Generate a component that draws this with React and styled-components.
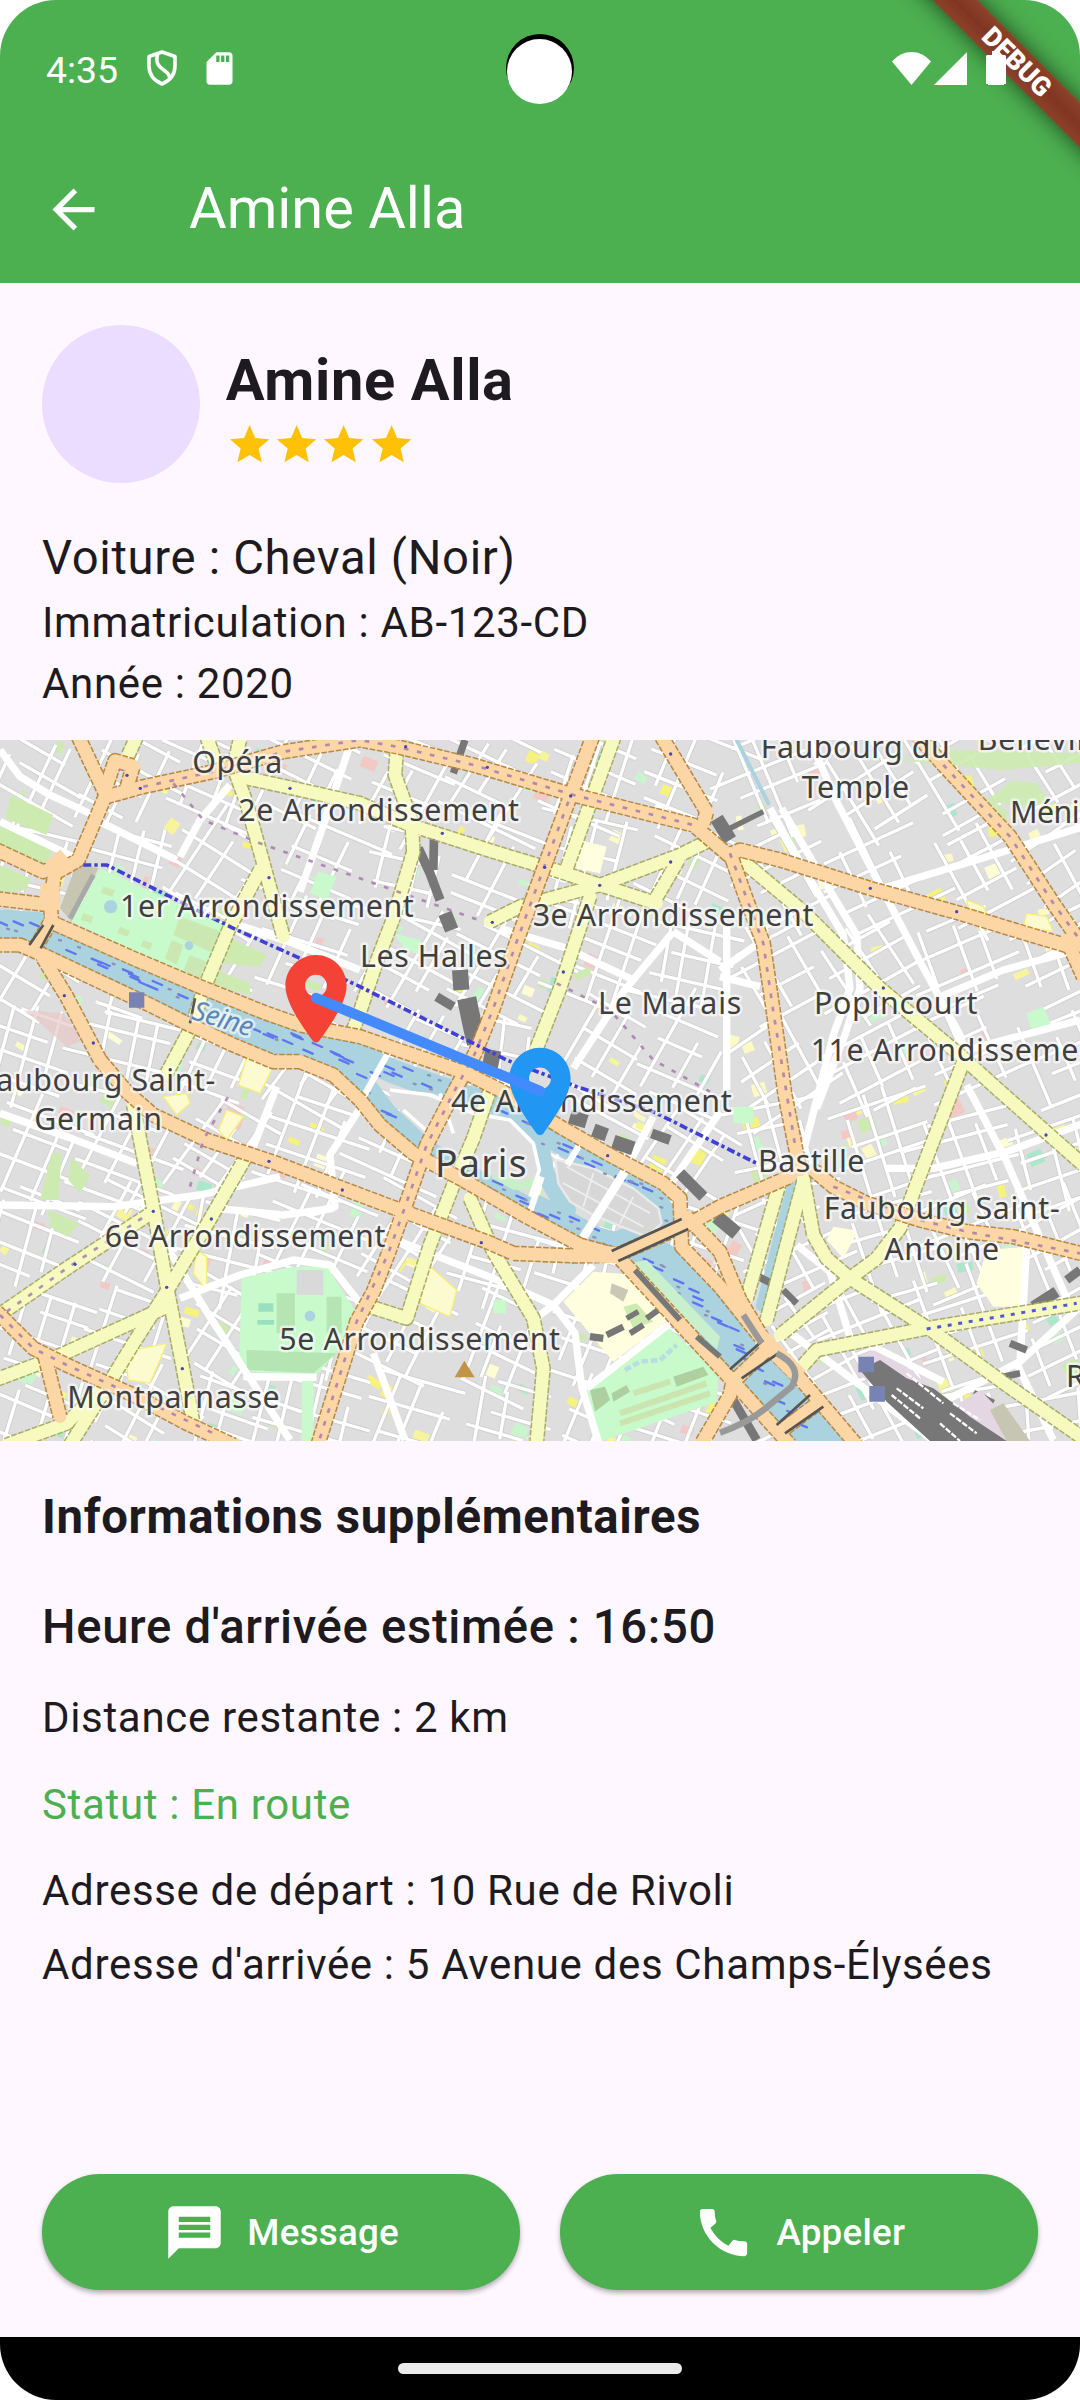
import React from "react";
import styled, { createGlobalStyle } from "styled-components";
import { MdArrowBack, MdCall, MdMessage, MdSdCard, MdStar } from "react-icons/md";

const GREEN = "#4caf50";
const INK = "#1d1b20";

const GlobalStyle = createGlobalStyle`
  * { box-sizing: border-box; }
  body { margin: 0; background: #fff; font-family: Roboto, sans-serif; }
`;

const Screen = styled.main`
  position: relative;
  display: flex;
  flex-direction: column;
  width: 1080px;
  height: 2400px;
  overflow: hidden;
  border-radius: 56px;
  background: #fef7ff;
  color: ${INK};
`;

const Header = styled.header`
  height: 283px;
  flex: none;
  background: ${GREEN};
  color: #fff;
`;

const StatusBar = styled.div`
  display: flex;
  align-items: center;
  height: 136px;
  padding: 0 74px 0 46px;
`;

const Clock = styled.span`
  width: 101px;
  padding-top: 4px;
  font-size: 37.4px;
  line-height: 44px;
`;

const StatusIcon = styled.svg`
  display: block;
  flex: none;
  width: ${(p) => p.$w}px;
  height: ${(p) => p.$h}px;
  margin-left: ${(p) => p.$gap || 0}px;
`;

const SdIcon = styled(MdSdCard)`
  width: 39px;
  height: 39px;
  margin-left: 23px;
  margin-top: 1px;
`;

const SystemIcons = styled.div`
  display: flex;
  align-items: center;
  margin-left: auto;
`;

const CameraRing = styled.div`
  position: absolute;
  top: 34px;
  left: 506px;
  width: 68px;
  height: 68px;
  border-radius: 50%;
  background: #000;
`;

const CameraHole = styled.div`
  position: absolute;
  top: 39px;
  left: 507px;
  width: 65px;
  height: 65px;
  border-radius: 50%;
  background: #fff;
`;

const DebugBanner = styled.div`
  position: absolute;
  top: 46px;
  left: 867px;
  width: 300px;
  height: 31.6px;
  transform: rotate(45deg);
  background: linear-gradient(#8b4329, #813424 50%, #8b4329);
  box-shadow: 0 0 22px rgba(0, 0, 0, 0.6);
  color: #fff;
  font-size: 26.8px;
  font-weight: 900;
  line-height: 32px;
  text-align: center;
`;

const BatteryLayer = styled.div`
  position: absolute;
  top: 51px;
  left: 986px;
`;

const Toolbar = styled.div`
  display: flex;
  align-items: center;
  height: 147px;
  padding-left: 42px;
`;

const BackIcon = styled(MdArrowBack)`
  width: 63px;
  height: 63px;
  margin-right: 84px;
`;

const Title = styled.h1`
  margin: 0;
  padding-bottom: 3px;
  font-size: 57.75px;
  font-weight: 400;
  line-height: 72px;
`;

const Profile = styled.section`
  display: flex;
  align-items: center;
  gap: 26.25px;
  padding: 42px 42px 0;
`;

const Avatar = styled.div`
  width: 157.5px;
  height: 157.5px;
  border-radius: 50%;
  background: #eaddff;
`;

const DriverName = styled.h2`
  margin: 0;
  font-size: 57.75px;
  font-weight: 700;
  line-height: 82.5px;
  letter-spacing: 0.656px;
`;

const Stars = styled.div`
  display: flex;
  color: #ffc107;
  svg { width: 47.25px; height: 47.25px; }
`;

const Vehicle = styled.section`
  padding: 41px 42px 26.5px;
`;

const Line = styled.p`
  margin: 0;
  margin-top: ${(p) => p.$gap || 0}px;
  font-size: ${(p) => (p.$large ? 47.25 : 42)}px;
  font-weight: ${(p) => p.$weight || 400};
  line-height: ${(p) => (p.$large ? 68 : 61)}px;
  letter-spacing: ${(p) => p.$spacing || 0.67}px;
  color: ${(p) => p.$color || INK};
  white-space: nowrap;
`;

const MapView = styled.svg`
  display: block;
  flex: none;
  width: 1080px;
  height: 701px;
`;

const MapLabel = styled.text`
  font-family: "Noto Sans", sans-serif;
  font-size: ${(p) => p.$size || 91}px;
  font-style: ${(p) => (p.$water ? "italic" : "normal")};
  fill: ${(p) => (p.$water ? "#5b86b8" : "#3f3f3f")};
  stroke: rgba(255, 255, 255, 0.6);
  stroke-width: 15px;
  stroke-linejoin: round;
  paint-order: stroke;
`;

const Details = styled.section`
  padding: 42px 42px 0;
`;

const Actions = styled.div`
  display: grid;
  grid-template-columns: 1fr 1fr;
  gap: 39.375px;
  margin-top: auto;
  padding: 0 42px 47px;
`;

const ActionButton = styled.button`
  display: flex;
  align-items: center;
  justify-content: center;
  gap: 21px;
  height: 116px;
  padding: 0;
  border: 0;
  border-radius: 58px;
  background: ${GREEN};
  box-shadow: 0 3px 5px rgba(0, 0, 0, 0.3);
  color: #fff;
  font: 500 36.75px/52px Roboto, sans-serif;
  letter-spacing: 0.26px;
  svg { width: 63px; height: 63px; }
`;

const ButtonLabel = styled.span`
  padding-top: 1px;
`;

const NavBar = styled.nav`
  display: flex;
  justify-content: center;
  height: 63px;
  padding-top: 26px;
  background: #000;
`;

const HomePill = styled.div`
  width: 284px;
  height: 11px;
  border-radius: 5.5px;
  background: #ebebeb;
`;

/* ---------- map data: three units per screen pixel ---------- */

const ORANGE = [
  "M235,-10 L320,170 L430,140 L640,95 L850,35 L1080,0 L1190,20 L1420,75 L1720,165 L2080,255 L2185,345 L2220,330 L2340,360 L2610,445 L2880,520 L3060,575 L3210,620",
  "M315,150 L345,62 L400,78 L378,150",
  "M315,170 L235,360 L165,400 L150,480 L155,540 L105,625",
  "M-10,330 L130,395 L170,380",
  "M-10,476 L150,495",
  "M150,545 L400,655 L600,740 L800,820 L900,855 L1080,890 L1180,925 L1400,1000 L1500,1050 L1680,1160 L1820,1240 L1990,1330 L2040,1375 L2045,1520 L2160,1640 L2300,1815 L2400,1915 L2570,2115",
  "M-10,615 L60,615 L130,645 L300,725 L450,795 L560,850 L700,915 L820,965 L900,965 L1000,1005 L1080,1080 L1140,1155 L1240,1240 L1380,1315 L1580,1430 L1740,1515 L1850,1545 L2200,1925 L2370,2115",
  "M130,655 L200,770 L300,960 L380,1055 L460,1125 L620,1200 L830,1270 L1080,1365 L1240,1425 L1460,1505 L1540,1540 L1730,1548 L1850,1545 L2080,1445 L2160,1400 L2370,1310",
  "M1778,-10 L1705,185 L1620,415 L1550,605 L1480,805 L1425,940 L1365,1050 L1280,1215 L1210,1415 L1165,1540 L1120,1655 L1070,1745 L1010,1935 L955,2110",
  "M1985,-10 L2120,215 L2110,250",
  "M2190,340 L2240,480 L2290,610 L2320,815 L2355,1065 L2385,1215 L2400,1290",
  "M2755,-10 L2830,75 L3030,290 L3160,490 L3250,620",
  "M3200,600 L3250,710",
  "M2440,1290 L2500,1340 L2600,1390 L2760,1440 L2900,1475 L3040,1490 L3250,1542",
  "M-10,1715 L100,1825 L200,1875 L400,1965 L560,2050 L700,2115",
  "M135,1850 L180,2030",
  "M2060,1430 L2160,1535 L2220,1680 L2300,1815",
  "M2200,1925 L2310,1820",
  "M2340,2075 L2460,1985",
  "M2200,1915 L2190,1965 L2105,2110",
];

const YELLOW = [
  "M410,-10 L385,45",
  "M620,-10 L645,60 L700,80 L722,-10",
  "M700,80 L740,190 L790,370 L850,590",
  "M720,110 L880,145 L1080,190 L1230,255 L1480,335 L1680,395 L1800,435 L1970,490",
  "M780,390 L690,560 L610,750 L575,860 L500,1000",
  "M1190,35 L1185,105 L1235,245 L1240,335 L1180,535 L1130,665 L1075,830 L1055,880",
  "M1843,-10 L1700,385",
  "M1470,545 L1560,500 L1800,435 L2040,345 L2120,305",
  "M2035,360 L1965,480",
  "M1770,470 L1680,745 L1610,925",
  "M1470,1050 L1420,1195 L1360,1335 L1290,1515 L1220,1735 L1110,1700",
  "M1410,1375 L1480,1535 L1600,1735 L1630,1885 L1610,2110",
  "M2230,365 L2410,515 L2640,745 L2880,945 L2990,1045 L3250,1275",
  "M2890,965 L2850,1070 L2760,1305 L2700,1465 L2630,1555 L2550,1615 L2340,1785",
  "M2410,1315 L2440,1485 L2480,1555 L2550,1615 L2800,1775 L3020,1935 L3250,2095",
  "M2340,1325 L2240,1675",
  "M2410,1325 L2300,1740",
  "M2410,1875 L2450,1830 L2780,1765 L3250,1688",
  "M400,1095 L460,1405 L500,1635 L545,1865 L580,2050",
  "M735,1255 L620,1455 L500,1655 L400,1810 L330,1925 L210,2115",
  "M-10,1730 L200,1585 L460,1415",
  "M-10,1918 L160,1855 L490,1705",
  "M20,2115 L200,2050 L300,1950",
];

const AVENUES = [
  "M0,30 L60,110 L150,165 L280,225", "M300,245 L530,360", "M690,135 L600,240 L540,350",
  "M1050,15 L960,285 L900,455", "M700,550 L880,610 L1080,690", "M0,245 L240,360",
  "M1500,565 L1700,625 L1900,720", "M2020,575 L1870,755 L1720,985", "M2020,575 L2160,665",
  "M2310,205 L2410,385 L2530,585 L2550,745 L2500,885 L2410,1235",
  "M2345,205 L2450,385 L2570,585 L2580,745 L2535,885 L2450,1105",
  "M2430,0 L2510,185 L2640,435 L2760,665 L2880,885 L2900,950", "M2600,460 L3010,335 L3250,260",
  "M2810,775 L3010,690 L3210,635", "M2900,930 L3240,840", "M2660,1285 L2800,1285 L3020,1235 L3250,1150",
  "M2900,1035 L3020,1265 L3200,1675", "M2390,1515 L2490,1595 L2560,1825", "M2360,1770 L2560,1920 L2810,2110",
  "M0,1120 L200,1190 L410,1270", "M0,1395 L340,1400 L600,1365 L840,1310", "M830,1040 L760,1220",
  "M540,1675 L720,1605 L880,1560 L990,1575 L1080,1690", "M500,1520 L620,1715 L870,2100",
  "M650,1405 L850,1425 L1000,1405", "M1080,1105 L990,1245 L1005,1400 L930,1420", "M1745,1500 L1880,1285 L1960,1130",
  "M2160,1115 L2010,1335", "M1200,1505 L1480,1615 L1660,1695 L1780,1575",
  "M1600,1740 L1660,1695 L1725,1780 L1745,1940 L1795,2105", "M1120,1840 L1215,2100",
  "M1700,1275 L1738,1215", "M1585,1430 L1625,1315", "M1080,1085 L1172,920", "M1760,1945 L2010,1750",
  "M730,1910 L950,1912", "M2180,560 L2180,1050", "M2160,690 L2290,600", "M2160,710 L2280,740",
  "M3060,1865 L3080,1520", "M2840,1980 L3060,1865 L3240,1700", "M3050,1870 L3160,2100", "M2620,1820 L2830,1925",
];

const METRO = [
  "M250,375 L320,375 L540,485 L700,565 L900,655 L1080,740 L1140,770 L1410,905 L1520,960 L1730,1040 L1960,1115 L2160,1215 L2270,1270",
];

const DARK = [
  ["M1255,325 L1290,400 L1320,480", 28], ["M1302,290 L1300,390", 26], ["M1335,520 L1355,570", 42],
  ["M1380,690 L1384,750", 48], ["M1400,775 L1420,870 L1430,910", 58], ["M1310,770 L1360,800", 28],
  ["M1395,0 L1360,100", 22], ["M1480,930 L1470,980", 48], ["M1710,1130 L1760,1145", 42],
  ["M1780,1170 L1820,1185", 40], ["M1840,1205 L1900,1225", 42], ["M1955,1180 L2010,1200", 30],
  ["M2040,1300 L2110,1370", 34], ["M2150,235 L2190,300", 42], ["M2180,270 L2290,215", 16],
  ["M2300,1610 L2290,1630", 44], ["M2350,1650 L2390,1690", 20],
  ["M2150,1430 L2210,1480", 42], ["M3200,1620 L3240,1590", 26], ["M3100,1700 L3170,1655", 34],
  ["M3030,1810 L3080,1830", 22], ["M3010,1910 L3060,1900", 20], ["M2920,1960 L2980,1990", 22],
  ["M1770,1790 L1810,1795", 22], ["M1820,1785 L1870,1760", 20], ["M1890,1780 L1930,1755", 18],
  ["M1940,1735 L1975,1710", 18], ["M1880,1735 L1915,1715", 16], ["M2200,1980 L2270,2100", 26],
];

const LABELS = [
  ["Opéra", 577, 98, 270], ["2e Arrondissement", 715, 243, 842], ["1er Arrondissement", 360, 530, 881],
  ["3e Arrondissement", 1598, 557, 842], ["Les Halles", 1080, 682, 443], ["Le Marais", 1794, 822, 430],
  ["Popincourt", 2442, 822, 490], ["11e Arrondissement", 2432, 962, 896], ["Faubourg Saint-", -60, 1052, 706],
  ["Germain", 103, 1170, 383], ["Faubourg du", 2282, 53, 567], ["Temple", 2405, 175, 322],
  ["Belleville", 2933, 30, 400], ["Ménilmontant", 3030, 250, 590], ["4e Arrondissement", 1353, 1115, 842],
  ["Paris", 1305, 1310, 275, 112], ["Bastille", 2274, 1297, 319], ["Faubourg Saint-", 2471, 1437, 708],
  ["Antoine", 2653, 1560, 344], ["6e Arrondissement", 314, 1520, 842], ["5e Arrondissement", 838, 1830, 842],
  ["Montparnasse", 202, 2003, 637], ["Reuilly", 3198, 1940, 300],
];

const PIN =
  "M12 2C8.13 2 5 5.13 5 9c0 4.17 4.42 9.92 6.24 12.6.4.48 1.13.48 1.53 0C14.58 18.92 19 13.17 19 9c0-3.87-3.13-7-7-7zm0 9.5c-1.38 0-2.5-1.12-2.5-2.5s1.12-2.5 2.5-2.5 2.5 1.12 2.5 2.5-1.12 2.5-2.5 2.5z";

const makeRandom = (start) => {
  let s = start;
  return () => {
    s = (s * 1664525 + 1013904223) % 4294967296;
    return s / 4294967296;
  };
};

/* Side streets: every block of the city gets its own orientation. */
function buildStreets() {
  const rand = makeRandom(41);
  const paths = [];
  for (let gx = 0; gx < 12; gx += 1) {
    for (let gy = 0; gy < 8; gy += 1) {
      const cx = gx * 280 + 80 + rand() * 60;
      const cy = gy * 280 + 80 + rand() * 60;
      const base = gx > 7 ? (gy < 4 ? -26 : -20) : 22;
      const a = ((base + (rand() - 0.5) * 20) * Math.PI) / 180;
      [a, a + Math.PI / 2 + (rand() - 0.5) * 0.25].forEach((t, dir) => {
        const n = dir ? 3 : 4;
        for (let i = 0; i < n; i += 1) {
          const off = (i - n / 2 + 0.35 + rand() * 0.45) * 80;
          const len = 70 + rand() * 100;
          const shift = (rand() - 0.5) * 90;
          const mx = cx - Math.sin(t) * off + Math.cos(t) * shift;
          const my = cy + Math.cos(t) * off + Math.sin(t) * shift;
          const dx = Math.cos(t) * len;
          const dy = Math.sin(t) * len;
          paths.push(`M${(mx - dx).toFixed(0)},${(my - dy).toFixed(0)}L${(mx + dx).toFixed(0)},${(my + dy).toFixed(0)}`);
        }
      });
    }
  }
  return paths;
}

function buildPlots() {
  const rand = makeRandom(907);
  const fills = ["#fbf9c4", "#f6f27e", "#f7f59c", "#c8f5cc", "#cdebb0", "#f3c9c6", "#fdfcd4", "#a9e8c9"];
  return Array.from({ length: 280 }, () => {
    const x = rand() * 3240;
    const y = rand() * 2100;
    const w = 14 + rand() * 36;
    const h = 14 + rand() * 34;
    return {
      x, y, w, h,
      angle: 15 + rand() * 20 - (x > 2200 ? 45 : 0),
      fill: fills[Math.floor(rand() * fills.length)],
    };
  });
}

/* Navigation marks scattered along the river. */
function buildRipples() {
  const rand = makeRandom(77);
  const legs = [
    [0, 555, 100, 565], [180, 600, 560, 775], [760, 865, 960, 925], [980, 935, 1080, 1000],
    [1120, 975, 1340, 1045], [1480, 1090, 1600, 1150], [1640, 1190, 1960, 1370], [1970, 1380, 2000, 1440],
    [1430, 1310, 1850, 1520], [1940, 1550, 2160, 1755], [2160, 1760, 2400, 2060], [1100, 1060, 1180, 1150],
  ];
  return legs.flatMap(([x1, y1, x2, y2]) => {
    const n = Math.ceil(Math.hypot(x2 - x1, y2 - y1) / 25);
    return Array.from({ length: n }, (_, i) => {
      const k = i / n;
      const x = x1 + (x2 - x1) * k + (rand() - 0.5) * 30;
      const y = y1 + (y2 - y1) * k + (rand() - 0.5) * 46;
      const long = rand() > 0.5;
      return {
        d: `M${x.toFixed(0)},${y.toFixed(0)}l${long ? 28 : 6},${long ? 12 : 2}`,
        color: long ? "#5f76ee" : "#8f8fba",
      };
    });
  });
}

const STREETS = buildStreets();
const PLOTS = buildPlots();
const RIPPLES = buildRipples();

function Roads({ paths, width, fill, edge }) {
  return (
    <>
      {paths.map((d) => <path key={d} d={d} stroke={edge} strokeWidth={width + 9} strokeDasharray="17 5" />)}
      {paths.map((d) => <path key={d} d={d} stroke={fill} strokeWidth={width} strokeLinecap="round" />)}
    </>
  );
}

function CityMap() {
  return (
    <MapView viewBox="0 0 3240 2103" preserveAspectRatio="none" fill="none" strokeLinejoin="round">
      <rect width="3240" height="2103" fill="#dedede" />
      {PLOTS.map((p, i) => (
        <rect key={i} x={p.x} y={p.y} width={p.w} height={p.h} fill={p.fill} transform={`rotate(${p.angle} ${p.x} ${p.y})`} />
      ))}
      <g stroke="#cecece" strokeWidth="15">{STREETS.map((d) => <path key={d} d={d} />)}</g>
      <g stroke="#fff" strokeWidth="10">{STREETS.map((d) => <path key={d} d={d} />)}</g>

      <g fill="#cdebb0">
        <path d="M0,260 L70,285 L160,325 L135,378 L0,315z M35,165 L160,225 L140,285 L15,235z M0,375 L90,415 L80,450 L0,458z" />
        <path d="M690,595 L800,645 L780,680 L665,670z M650,690 L750,730 L750,765 L635,735z" />
        <path d="M155,1240 L185,1240 L175,1380 L120,1380z M215,1250 L270,1310 L240,1360 L205,1320z M145,1410 L240,1450 L200,1490 L150,1460z" />
        <path d="M2590,50 L2760,60 L2820,30 L3240,40 L3240,70 L3000,90z M2960,180 L3040,120 L3110,130 L3150,190 L3060,200z M2960,170 L3020,210 L3020,250 L2960,215z" opacity="0.9" />
        <path d="M1720,705 L1765,680 L1775,700 L1730,722z M1540,1340 L1620,1310 L1635,1400 L1560,1370z" />
      </g>
      <path d="M230,370 L295,385 L215,545 L180,505z" fill="#c6c6b2" />
      <path d="M280,405 L210,535" stroke="#a9a9a9" strokeWidth="15" />
      <path d="M300,385 L675,555 L595,725 L215,545z" fill="#c8facc" />
      <g fill="#cbe8b2">
        <path d="M540,530 L665,575 L640,640 L520,585z M515,600 L550,615 L530,675 L495,655z M570,645 L620,665 L595,720 L550,690z" />
        <path d="M310,440 l35,10 l-8,20 l-35,-12z M250,520 l30,10 l-8,20 l-30,-10z M360,560 l30,12 l-8,18 l-30,-12z M430,600 l28,10 l-8,20 l-28,-12z M430,500 l30,10 l-8,16 l-30,-10z" />
      </g>
      <circle cx="332" cy="500" r="20" fill="#aad3df" />
      <circle cx="567" cy="617" r="13" fill="#aad3df" />
      <path d="M725,1615 L880,1580 L980,1580 L1068,1715 L1040,1800 L950,1905 L740,1895 L718,1850z" fill="#c8facc" />
      <path d="M890,1590 h80 v75 h-80z" fill="#d9d9d9" />
      <path d="M740,1830 L1010,1840 L940,1900 L740,1890z M830,1660 h55 v120 h-55z M980,1670 h45 v110 h-45z" fill="#b6e5b4" />
      <path d="M775,1690 h45 v25 h-45z M772,1740 h50 v14 h-50z" fill="#9adfc0" />
      <circle cx="930" cy="1728" r="16" fill="#aad3df" />
      <path d="M905,1912 h35 v200 h-35z" fill="#c8facc" />
      <path d="M1760,1945 L2010,1765 L2155,1905 L2150,1985 L1800,2105z" fill="#c8facc" />
      <path d="M1770,1950 L1815,1940 L1830,1980 L1785,2015z M1835,1960 L1880,1935 L1890,1955 L1840,1985z M2020,1910 L2110,1880 L2125,1905 L2030,1940z" fill="#aed0a0" />
      <path d="M1900,1960 L2010,1925 M1860,2020 L2120,1930 M1860,2050 L2130,1960" stroke="#cbe5b0" strokeWidth="18" />
      <path d="M1875,1890 L1920,1865 L1980,1860 L2030,1815" stroke="#b9dde2" strokeWidth="14" strokeDasharray="20 8" />
      <path d="M1690,1685 L1780,1595 L1915,1605 L2005,1740 L1840,1865z" fill="#ffffe0" />
      <path d="M1835,1630 L1885,1650 L1870,1685 L1830,1660z" fill="#c9c8b4" />
      <path d="M1870,1700 L1910,1690 L1960,1745 L1900,1765z" fill="#cdebb0" />
      <path d="M2500,1460 L2560,1470 L2565,1490 L2530,1555 L2480,1500z M2960,1530 L3080,1520 L3070,1700 L2980,1700 L2930,1630z M1740,300 L1820,320 L1800,400 L1725,385z" fill="#ffffe0" />
      <path d="M2900,480 L2950,500 L2960,520 L2905,505z M3080,520 L3140,530 L3160,575 L3070,560z M380,1880 L400,1830 L500,1810 L480,1860 L450,1930 L385,1920z M490,1070 L560,1060 L570,1090 L530,1125z M1280,1570 L1370,1650 L1350,1730 L1260,1690z M1450,1130 L1510,1150 L1470,1240 L1430,1230z M680,1110 L730,1130 L680,1200 L655,1170z M590,1530 L620,1550 L620,1650 L580,1600z M750,920 L830,960 L780,1060 L715,1035z" fill="#fcfbcf" stroke="#f6ee7c" strokeWidth="4" />
      <path d="M75,810 L190,820 L250,900 L200,920z" fill="#e8c8c8" opacity=".7" />
      <path d="M955,395 L1010,410 L980,480 L930,460z M1180,580 L1260,600 L1280,650 L1220,630z M3080,820 L3130,800 L3160,870 L3100,890z M2200,1100 L2260,1100 L2260,1150 L2200,1150z M1480,1680 h38 v40 h-38z" fill="#c8facc" />

      <g stroke="#fff" strokeWidth="22">{AVENUES.map((d) => <path key={d} d={d} />)}</g>

      <g stroke="#aad3df" strokeLinecap="round">
        <path d="M-20,555 L110,565 L200,605 L400,700 L580,785 L800,885 L940,920 L1060,975" strokeWidth="98" />
        <path d="M1000,930 L1100,1040 L1160,1120 L1250,1205" strokeWidth="62" />
        <path d="M1250,1215 L1460,1320 L1640,1410 L1790,1490 L1860,1510" strokeWidth="60" />
        <path d="M1040,930 L1180,995 L1380,1065 L1520,1110 L1620,1170 L1740,1240 L1860,1310 L1960,1375 L2000,1430" strokeWidth="72" />
        <path d="M1612,1170 L1635,1300 L1700,1410" strokeWidth="56" />
        <path d="M1880,1520 L1980,1560 L2080,1670 L2180,1775" strokeWidth="112" />
        <path d="M2120,1700 L2160,1770 L2280,1905 L2380,2015 L2490,2120" strokeWidth="118" />
        <path d="M2205,-10 L2305,190" strokeWidth="12" />
        <path d="M2378,1320 L2280,1700" strokeWidth="26" />
      </g>
      <path d="M1155,1045 L1300,1060 L1420,1110 L1510,1130 L1590,1190 L1620,1280 L1600,1375 L1440,1290 L1290,1200 L1210,1120z" fill="#dedede" />
      <path d="M1540,1330 L1610,1310 L1610,1365z M1470,1310 L1540,1310 L1570,1345 L1540,1350z" fill="#c8f0c8" />
      <path d="M1170,1050 L1290,1065 L1420,1120 L1530,1140 L1600,1210 L1618,1290 L1590,1370 M1210,1110 L1300,1190 M1320,1060 L1360,1180" stroke="#fff" strokeWidth="11" />
      <path d="M1665,1258 L1780,1285 L1900,1345 L1975,1405 L1985,1450 L1940,1490 L1790,1430 L1710,1385 L1675,1330z" fill="#d7d7d7" stroke="#ece9e9" strokeWidth="7" />
      <path d="M1700,1280 L1950,1420 M1690,1330 L1930,1460 M1780,1300 L1750,1400 M1840,1330 L1800,1430 M1900,1370 L1860,1450" stroke="#efefef" strokeWidth="5" />
      <g strokeWidth="7" strokeLinecap="round">{RIPPLES.map((r, i) => <path key={i} d={r.d} stroke={r.color} />)}</g>
      <path d="M1890,1570 L1940,1560 L2160,1790 L2150,1830z" fill="#c8f0cc" />

      <g stroke="#777">{DARK.map(([d, w]) => <path key={d} d={d} strokeWidth={w} />)}</g>
      <path d="M2560,1890 L2620,1830 L2720,1880 L2860,2000 L2940,1950 L3090,2103 L2840,2103z" fill="#e4d6e2" />
      <path d="M2580,1890 L2640,1860 L2720,1915 L2800,1945 L2860,1990 L2910,2030 L3020,2103 L2790,2103 L2660,1985z" fill="#777" />
      <path d="M2970,2010 L3010,1990 L3090,2103 L3020,2103z" fill="#c6c6b2" />
      <path d="M2690,1945 L2770,2005 M2675,1965 L2760,2035 M2720,1900 L2830,1990 M2850,2020 L2930,2080 M2820,2050 L2880,2103 M2860,1990 L2940,2040" stroke="#fff" strokeWidth="7" strokeDasharray="18 5" />
      <path d="M1745,1500 L1880,1285" stroke="#fff" strokeWidth="26" />
      <path d="M1702,1275 L1738,1215 M1585,1430 L1625,1310 M1085,1080 L1172,925" stroke="#fff" strokeWidth="19" />

      <Roads paths={YELLOW} width={37} fill="#f7fabf" edge="#a9ac62" />
      <Roads paths={ORANGE} width={38} fill="#fcd6a4" edge="#bb8740" />
      <path d="M155,390 L200,350 M150,510 L150,430" stroke="#fcd6a4" strokeWidth="58" />
      <path d="M1720,1540 L1850,1545 M2280,1790 L2400,1910" stroke="#fcd6a4" strokeWidth="50" />
      <g stroke="#a67caf" strokeWidth="8" strokeDasharray="14 26" opacity=".85">
        <path d="M430,140 L640,95 L850,35 L1080,0 L1190,20 L1420,75 L1720,165 L2080,255" />
        <path d="M1705,185 L1620,415 L1550,605 L1480,805 L1425,940 L1365,1050 L1280,1215 L1210,1415 L1165,1540 L1070,1745 L1010,1935 L955,2110" />
        <path d="M2190,340 L2290,610 L2320,815 L2385,1215 M2830,75 L3030,290 L3160,490 L3240,600" />
        <path d="M2500,1340 L2760,1440 L2900,1475 L3240,1540 M0,1725 L100,1825 L200,1875 L400,1965 L640,2080" />
        <path d="M20,1715 L200,1585 L440,1425 M520,130 L610,240 L780,310 L1080,415 L1450,545 M1670,730 L1830,810 L1960,960 L2130,1055 M570,1340 L610,1200 L690,1060" />
      </g>
      <g stroke="#4040d6" strokeWidth="11" strokeDasharray="24 9 10 10">{METRO.map((d) => <path key={d} d={d} />)}</g>
      <path d="M2780,1767 L3230,1690" stroke="#5555d8" strokeWidth="9" strokeDasharray="12 20" />
      <path d="M130,555 L88,615 M160,555 L122,625 M1835,1533 L2045,1437 M1855,1563 L2065,1467 M2290,1800 L2190,1888 M2335,1840 L2225,1915 M2430,1965 L2330,2055 M2470,2000 L2355,2080 M585,775 L570,850" stroke="#555" strokeWidth="8" />
      <path d="M1905,1590 L2040,1740 M2090,1790 L2160,1850" stroke="#777" strokeWidth="17" />
      <path d="M2230,1725 L2285,1810 M2330,1840 Q2410,1880 2375,1940 L2290,2010 Q2240,2050 2160,2078" stroke="#999" strokeWidth="19" />

      <g fill="#4747b2">
        {[[137, 20], [382, 82], [632, 168], [932, 42], [247, 280], [554, 382], [719, 436], [932, 366], [610, 696], [397, 547]].map(([x, y]) => (
          <circle key={x + y} cx={x + 1080} cy={y} r="5" />
        ))}
        {[[381, 106], [421, 145], [870, 145], [807, 413], [193, 767], [280, 909], [460, 1414], [500, 1642], [634, 1437], [225, 1573], [547, 1886], [2611, 445], [2870, 515], [2650, 744], [3138, 1185], [1444, 1508], [1823, 1247], [807, 1264], [1027, 1350]].map(([x, y]) => (
          <circle key={`${x}-${y}`} cx={x} cy={y} r="5" />
        ))}
      </g>
      <path d="M387,757h46v46h-46z M2575,1850h47v47h-47z M2608,1938h47v47h-47z" fill="#7883b3" />
      <path d="M1364,1912 L1393,1862 L1424,1912z" fill="#c4934a" />

      <MapLabel $water $size={82} transform="translate(572 836) rotate(17)" textLength="186">Seine</MapLabel>
      {LABELS.map(([name, x, y, length, size]) => (
        <MapLabel key={`${name}${x}`} x={x} y={y} textLength={length} $size={size}>{name}</MapLabel>
      ))}

      <path d={PIN} fill="#f44336" transform="translate(790.5 619) scale(13.125)" />
      <path d={PIN} fill="#2196f3" transform="translate(1462.5 897) scale(13.125)" />
      <path d="M948,774 L1620,1053" stroke="#448aff" strokeWidth="31" strokeLinecap="round" />
    </MapView>
  );
}

export default function App() {
  return (
    <>
      <GlobalStyle />
      <Screen>
        <Header>
          <StatusBar>
            <Clock>4:35</Clock>
            <StatusIcon $w={30} $h={36} viewBox="0 0 30 36" fill="none" stroke="#fff" strokeWidth="3.6" strokeLinejoin="round">
              <path d="M15 2 L28 6.5 V16 C28 25 22 31 15 34 C8 31 2 25 2 16 V6.5z" />
              <path d="M10.5 4.5 C8 14 13 17 18 21 C22 24 23 26 22.5 28.5" />
            </StatusIcon>
            <SdIcon />
            <SystemIcons>
              <StatusIcon $w={39} $h={33} viewBox="0 0 39 33" fill="#fff">
                <path d="M0 9.5 Q8 0 19.5 0 Q31 0 39 9.5 L19.5 33z" />
              </StatusIcon>
              <StatusIcon $w={33} $h={33} $gap={3.5} viewBox="0 0 33 33" fill="#fff">
                <path d="M33 0 V33 H0z" />
              </StatusIcon>
              <StatusIcon $w={39} $h={34} />
            </SystemIcons>
          </StatusBar>
          <Toolbar>
            <BackIcon />
            <Title>Amine Alla</Title>
          </Toolbar>
        </Header>
        <CameraRing />
        <CameraHole />
        <DebugBanner>DEBUG</DebugBanner>
        <BatteryLayer>
          <StatusIcon $w={20} $h={34} viewBox="0 0 20 34" fill="#fff">
            <path d="M6 0 H14 V4 H19 L20 5 V33 H18 V34 H2 V33 H0 V5 L1 4 H6z" />
          </StatusIcon>
        </BatteryLayer>

        <Profile>
          <Avatar />
          <div>
            <DriverName>Amine Alla</DriverName>
            <Stars>
              <MdStar /><MdStar /><MdStar /><MdStar />
            </Stars>
          </div>
        </Profile>
        <Vehicle>
          <Line $large>Voiture : Cheval (Noir)</Line>
          <Line>Immatriculation : AB-123-CD</Line>
          <Line>Année : 2020</Line>
        </Vehicle>

        <CityMap />

        <Details>
          <Line $large $weight={700}>Informations supplémentaires</Line>
          <Line $large $weight={500} $gap={42}>Heure d'arrivée estimée : 16:50</Line>
          <Line $gap={26}>Distance restante : 2 km</Line>
          <Line $gap={26} $color={GREEN}>Statut : En route</Line>
          <Line $gap={25}>Adresse de départ : 10 Rue de Rivoli</Line>
          <Line $gap={13}>Adresse d'arrivée : 5 Avenue des Champs-Élysées</Line>
        </Details>

        <Actions>
          <ActionButton><MdMessage /><ButtonLabel>Message</ButtonLabel></ActionButton>
          <ActionButton><MdCall /><ButtonLabel>Appeler</ButtonLabel></ActionButton>
        </Actions>
        <NavBar><HomePill /></NavBar>
      </Screen>
    </>
  );
}
